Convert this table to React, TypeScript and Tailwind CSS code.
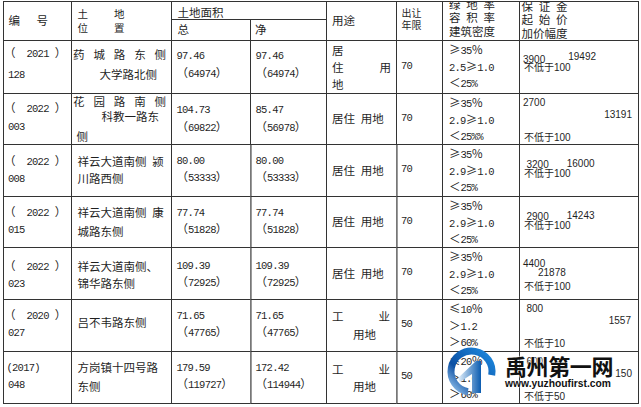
import type { ReactNode } from "react";

const cell = "border-r border-b border-[#333]";
const thick = "border-r-[#777] shadow-[1px_0_0_#9a9a9a]";
const sans = "font-['Liberation_Sans',sans-serif] text-[10px] leading-[10px]";

function M({ children }: { children: ReactNode }) {
  return (
    <span className="font-['Liberation_Mono',monospace] text-[10.5px] leading-none tracking-[-0.75px]">
      {children}
    </span>
  );
}

function Spread({ text, className = "" }: { text: string; className?: string }) {
  return (
    <div className={`flex justify-between ${className}`}>
      {Array.from(text).map((ch, i) => (
        <span key={i}>{ch}</span>
      ))}
    </div>
  );
}

function Code({ year, no, pt, line }: { year: string; no: string; pt: string; line: string }) {
  return (
    <div className={`${cell} ${pt}`}>
      <div className={line}>
        （<span className="inline-block w-[11px]" />
        <M>{year}</M>
        <span className="inline-block w-[6px]" />）
      </div>
      <div className={`pl-[4px] ${line}`}>
        <M>{no}</M>
      </div>
    </div>
  );
}

function Area({
  v,
  a,
  pt,
  line,
  edge = "",
}: {
  v: string;
  a: string;
  pt: string;
  line: string;
  edge?: string;
}) {
  return (
    <div className={`${cell} ${edge} pl-[4.5px] ${pt}`}>
      <div className={line}>
        <M>{v}</M>
      </div>
      <div className={line}>
        （<M>{a}</M>）
      </div>
    </div>
  );
}

function Res({ edge = "" }: { edge?: string }) {
  return (
    <div className={`${cell} ${edge} flex items-center pl-[5px]`}>{"居住\u2002用地"}</div>
  );
}

function Ind({ pt }: { pt: string }) {
  return (
    <div className={`${cell} ${thick} pl-[5px] pr-[6px] leading-[17.5px] ${pt}`}>
      <div className="flex justify-between">
        <span>工</span>
        <span>业</span>
      </div>
      <div className="pl-[21px]">用地</div>
    </div>
  );
}

function Term({ v }: { v: string }) {
  return (
    <div className={`${cell} flex items-center pb-[2px] pl-[4px]`}>
      <M>{v}</M>
    </div>
  );
}

function Ratio({ a, b, c }: { a: ReactNode; b: ReactNode; c: ReactNode }) {
  return (
    <div className={`${cell} pl-[6px] leading-[16.5px]`}>
      <div>{a}</div>
      <div>{b}</div>
      <div>{c}</div>
    </div>
  );
}

function Low({ children, className = "" }: { children: ReactNode; className?: string }) {
  return (
    <div className={`pl-[1px] text-[10px] leading-[10px] ${className}`}>{children}</div>
  );
}

const residential = (mid: string) => ({
  a: (
    <>
      ≥<M>35</M>％
    </>
  ),
  b: (
    <>
      <M>{mid}</M>≥<M>1.0</M>
    </>
  ),
  c: (
    <>
      ＜<M>25%</M>
    </>
  ),
});

export default function App() {
  const r1 = residential("2.5");
  const r2 = residential("2.9");

  return (
    <div className="relative h-[407px] w-[641px] overflow-hidden bg-white font-['Noto_Sans_CJK_SC',sans-serif] text-[11.5px] text-[#1f1f1f]">
      <div className="ml-[3px] mt-[1px] grid w-[636px] grid-cols-[68px_100px_79px_76px_70px_46px_77px_119px] grid-rows-[18px_21px_53px_51px_52px_51px_52px_52px_52px] border-l border-t border-[#333]">
        {/* header */}
        <div className={`${cell} row-span-2 flex items-center pl-[4.5px]`}>
          <span>编</span>
          <span className="ml-[16.5px]">号</span>
        </div>
        <div className={`${cell} row-span-2 pl-[5.5px] pt-[5px] text-[10.5px] leading-[13.5px]`}>
          <div className="flex gap-[26px]">
            <span>土</span>
            <span>地</span>
          </div>
          <div className="flex gap-[26px]">
            <span>位</span>
            <span>置</span>
          </div>
        </div>
        <div className={`${cell} col-span-2 pl-[5.5px] pt-[2px] leading-[16px]`}>土地面积</div>
        <div className={`${cell} row-span-2 flex items-center pl-[5px]`}>用途</div>
        <div className={`${cell} row-span-2 pl-[4.5px] pt-[4.5px] text-[10px] leading-[12.5px]`}>
          <div>出让</div>
          <div>年限</div>
        </div>
        <div className={`${cell} row-span-2 overflow-hidden pl-[6px] leading-[13.25px]`}>
          <div className="-mt-[4px] w-[46px]">
            <Spread text="绿地率" />
            <Spread text="容积率" />
            <div>建筑密度</div>
          </div>
        </div>
        <div className={`${cell} row-span-2 overflow-hidden pl-[1.5px] leading-[13.25px]`}>
          <div className="-mt-[2px] w-[46px]">
            <Spread text="保证金" />
            <Spread text="起始价" />
            <div>加价幅度</div>
          </div>
        </div>
        <div className={`${cell} flex items-center pl-[5.5px]`}>总</div>
        <div className={`${cell} flex items-center pl-[4px]`}>净</div>

        {/* 2021-128 */}
        <Code year="2021" no="128" pt="pt-[1px]" line="h-[21px] leading-[21px]" />
        <div className={`${cell} pt-[3px] leading-[20px]`}>
          <Spread text="药城路东侧" className="h-[20px] pl-[1px] pr-[5px]" />
          <div className="h-[20px] pl-[27.5px]">大学路北侧</div>
        </div>
        <Area v="97.46" a="64974" pt="pt-[4px]" line="h-[18px] leading-[18px]" />
        <Area v="97.46" a="64974" pt="pt-[4px]" line="h-[18px] leading-[18px]" />
        <div className={`${cell} pl-[5px] pr-[5px] pt-[0.5px] leading-[17px]`}>
          <div>居</div>
          <div className="flex justify-between">
            <span>住</span>
            <span>用</span>
          </div>
          <div>地</div>
        </div>
        <Term v="70" />
        <Ratio {...r1} />
        <div className={`${cell} pl-[3px] pt-[10px]`}>
          <div className="flex h-[10px] items-start">
            <span className={`${sans} mt-[4px]`}>3900</span>
            <span className={`${sans} ml-[23px] mt-[1px]`}>19492</span>
          </div>
          <Low className="mt-[1px]">
            不低于<span className={sans}>100</span>
          </Low>
        </div>

        {/* 2022-003 */}
        <Code year="2022" no="003" pt="pt-[4px]" line="h-[18px] leading-[18px]" />
        <div className={cell}>
          <Spread text="花园路南侧" className="h-[14px] pl-[1px] pr-[5px] leading-[14px]" />
          <div className="h-[17px] pl-[29.5px] leading-[17px]">科教一路东</div>
          <div className="mt-[2px] h-[18px] pl-[4.5px] leading-[18px]">侧</div>
        </div>
        <Area v="104.73" a="69822" pt="pt-[5px]" line="h-[18px] leading-[18px]" />
        <Area v="85.47" a="56978" pt="pt-[5px]" line="h-[18px] leading-[18px]" />
        <Res />
        <Term v="70" />
        <Ratio {...r2} c={<>＜<M>25%%</M></>} />
        <div className={`${cell} pl-[3px] pr-[6px] pt-[4px]`}>
          <div className={sans}>2700</div>
          <div className={`${sans} mt-[2px] text-right`}>13191</div>
          <Low className="mt-[12px]">
            不低于<span className={sans}>100</span>
          </Low>
        </div>

        {/* 2022-008 */}
        <Code year="2022" no="008" pt="pt-[7px]" line="h-[17px] leading-[17px]" />
        <div className={`${cell} pl-[5.5px] pt-[8px] leading-[17px]`}>
          <div>{"祥云大道南侧\u2002颍"}</div>
          <div>川路西侧</div>
        </div>
        <Area v="80.00" a="53333" pt="pt-[6px]" line="h-[17px] leading-[17px]" edge={thick} />
        <Area v="80.00" a="53333" pt="pt-[6px]" line="h-[17px] leading-[17px]" />
        <Res edge={thick} />
        <Term v="70" />
        <Ratio {...r2} />
        <div className={`${cell} pl-[3px] pt-[13px]`}>
          <div className="flex h-[9px] items-start">
            <span className={`${sans} ml-[3.5px] mt-[2px]`}>3200</span>
            <span className={`${sans} ml-[18px] mt-[0.5px]`}>16000</span>
          </div>
          <Low className="mt-[1px]">
            不低于<span className={sans}>100</span>
          </Low>
        </div>

        {/* 2022-015 */}
        <Code year="2022" no="015" pt="pt-[6px]" line="h-[17px] leading-[17px]" />
        <div className={`${cell} pl-[5.5px] pt-[6px] leading-[19px]`}>
          <div>{"祥云大道南侧\u2002康"}</div>
          <div>城路东侧</div>
        </div>
        <Area v="77.74" a="51828" pt="pt-[6px]" line="h-[17px] leading-[17px]" edge={thick} />
        <Area v="77.74" a="51828" pt="pt-[6px]" line="h-[17px] leading-[17px]" />
        <Res edge={thick} />
        <Term v="70" />
        <Ratio {...r2} />
        <div className={`${cell} pl-[3px] pt-[13px]`}>
          <div className="flex h-[9px] items-start">
            <span className={`${sans} ml-[3.5px] mt-[2px]`}>2900</span>
            <span className={`${sans} ml-[18px] mt-[0.5px]`}>14243</span>
          </div>
          <Low className="mt-[1px]">
            不低于<span className={sans}>100</span>
          </Low>
        </div>

        {/* 2022-023 */}
        <Code year="2022" no="023" pt="pt-[9px]" line="h-[17px] leading-[17px]" />
        <div className={`${cell} pl-[5.5px] pt-[10px] leading-[17px]`}>
          <div>祥云大道南侧、</div>
          <div>锦华路东侧</div>
        </div>
        <Area v="109.39" a="72925" pt="pt-[8px]" line="h-[17px] leading-[17px]" edge={thick} />
        <Area v="109.39" a="72925" pt="pt-[8px]" line="h-[17px] leading-[17px]" />
        <Res edge={thick} />
        <Term v="70" />
        <Ratio {...r2} />
        <div className={`${cell} pl-[3px] pt-[10.5px]`}>
          <div className={sans}>4400</div>
          <div className={`${sans} -mt-[1px] ml-[15px]`}>21878</div>
          <Low className="mt-[3px]">
            不低于<span className={sans}>100</span>
          </Low>
        </div>

        {/* 2020-027 */}
        <Code year="2020" no="027" pt="pt-[6px]" line="h-[17px] leading-[17px]" />
        <div className={`${cell} pl-[5.5px] pt-[14px] leading-[17px]`}>吕不韦路东侧</div>
        <Area v="71.65" a="47765" pt="pt-[6px]" line="h-[17px] leading-[17px]" edge={thick} />
        <Area v="71.65" a="47765" pt="pt-[6px]" line="h-[17px] leading-[17px]" />
        <Ind pt="pt-[8px]" />
        <Term v="50" />
        <Ratio
          a={<>≤<M>10</M>％</>}
          b={<>＞<M>1.2</M></>}
          c={<>＞<M>60%</M></>}
        />
        <div className={`${cell} pl-[3px] pr-[7px] pt-[4px]`}>
          <div className={`${sans} ml-[3.5px]`}>800</div>
          <div className={`${sans} mt-[1.5px] text-right`}>1557</div>
          <Low className="mt-[12px]">
            不低于<span className={sans}>10</span>
          </Low>
        </div>

        {/* 2017-048 */}
        <div className={`${cell} pt-[6px]`}>
          <div className="h-[17px] pl-[2.5px] leading-[17px]">
            <M>(2017)</M>
          </div>
          <div className="h-[17px] pl-[4px] leading-[17px]">
            <M>048</M>
          </div>
        </div>
        <div className={`${cell} pl-[5.5px] pt-[6px] leading-[19px]`}>
          <div>方岗镇十四号路</div>
          <div>东侧</div>
        </div>
        <Area v="179.59" a="119727" pt="pt-[6px]" line="h-[17px] leading-[17px]" edge={thick} />
        <Area v="172.42" a="114944" pt="pt-[6px]" line="h-[17px] leading-[17px]" />
        <Ind pt="pt-[8.5px]" />
        <Term v="50" />
        <Ratio
          a={<>≤<M>20</M>％</>}
          b={<>＞<M>1.0</M></>}
          c={<>＞<M>60%</M></>}
        />
        <div className={`${cell} pl-[3px] pr-[6px] pt-[5px]`}>
          <div className={`${sans} ml-[3.5px]`}>600</div>
          <div className={`${sans} mt-[1.5px] text-right`}>150</div>
          <Low className="mt-[12px]">
            不低于<span className={sans}>50</span>
          </Low>
        </div>
      </div>

      {/* watermark */}
      <svg
        className="pointer-events-none absolute left-[444px] top-[342px]"
        width="56"
        height="60"
        viewBox="444 342 56 60"
      >
        <defs>
          <linearGradient id="ring" x1="0" y1="1" x2="1" y2="0">
            <stop offset="0" stopColor="#9cc9f0" />
            <stop offset="0.35" stopColor="#0b4fa3" />
            <stop offset="1" stopColor="#1d8ae0" />
          </linearGradient>
          <linearGradient id="one" x1="0" y1="0" x2="1" y2="0">
            <stop offset="0" stopColor="#e4f1fc" />
            <stop offset="1" stopColor="#0b5cb0" />
          </linearGradient>
        </defs>
        <path
          d="M 467.9 391.7 A 20.5 20.5 0 1 1 491.7 375.1"
          fill="none"
          stroke="url(#ring)"
          strokeWidth="7"
        />
        <polygon
          points="458,378 476,361 481,361 481,393 472,393 472,374 460,382"
          fill="url(#one)"
        />
      </svg>
      <div className="pointer-events-none absolute left-[505px] top-[354px] flex flex-col">
        <div className="text-[22px] font-bold leading-[22px] tracking-[-0.4px] text-[#111] [text-shadow:0_0_2px_#fff,0_0_2px_#fff]">
          禹州第一网
        </div>
        <div className="mt-[2px] font-['Liberation_Sans',sans-serif] text-[10.3px] font-bold leading-[11px] text-[#111] [text-shadow:0_0_2px_#fff,0_0_2px_#fff]">
          www.yuzhoufirst.com
        </div>
      </div>
    </div>
  );
}
